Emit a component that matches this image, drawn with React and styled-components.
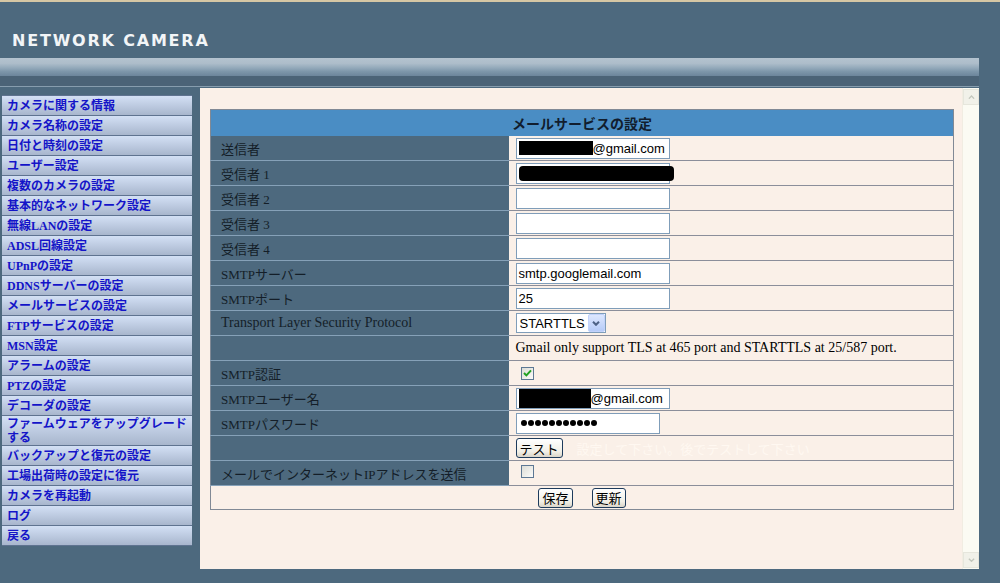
import React from "react";
import styled, { createGlobalStyle } from "styled-components";

const GlobalStyle = createGlobalStyle`
  html, body {
    margin: 0;
    padding: 0;
  }
  body {
    background: #4d697e;
    width: 1000px;
    height: 583px;
    overflow: hidden;
    font-family: "Liberation Serif", "Noto Sans CJK JP", serif;
  }
`;

const Page = styled.div`
  width: 1000px;
  height: 583px;
  display: flex;
  flex-direction: column;
`;

const TopLine = styled.div`
  height: 2px;
  background: #d6c7a4;
`;

const Header = styled.header`
  height: 56px;
  box-sizing: border-box;
  display: flex;
  align-items: flex-end;
  padding: 0 0 9px 12px;
`;

const Logo = styled.div`
  font: bold 16px "DejaVu Sans", sans-serif;
  line-height: 16px;
  letter-spacing: 1.8px;
  color: #f2f5f7;
`;

const Stripe = styled.div`
  width: 979px;
  height: 18px;
  background: linear-gradient(
    #b4c3cf 0%,
    #adbdca 30%,
    #93a9ba 55%,
    #7d96aa 75%,
    #6c859b 100%
  );
`;

const Band = styled.div`
  width: 979px;
  height: 10px;
  background: #4b6377;
  border-bottom: 1px solid #879dae;
`;

const Body = styled.div`
  flex: 1;
  display: flex;
  align-items: flex-start;
`;

const Nav = styled.nav`
  width: 190px;
  margin: 8px 0 0 2px;
  border-top: 1px solid #5f7390;
`;

const NavItem = styled.a`
  display: block;
  box-sizing: border-box;
  height: ${(p) => (p.$tall ? 30 : 20)}px;
  line-height: 19px;
  padding: ${(p) => (p.$tall ? "1px 2px 0 5px" : "0 2px 0 5px")};
  background: linear-gradient(#d3e0f5, #a8b6cd);
  border-bottom: 1px solid #5f7390;
  color: #1414c8;
  font: bold 12px "Liberation Serif", "Noto Sans CJK JP", serif;
  text-decoration: none;
  white-space: nowrap;
  overflow: hidden;
`;

const NavLine = styled.span`
  display: block;
  height: 14px;
  line-height: 14px;
`;

const Panel = styled.main`
  width: 779px;
  height: 481px;
  margin: 1px 0 0 8px;
  background: #faf0e8;
  display: flex;
`;

const Content = styled.div`
  flex: 1;
  padding: 21px 0 0 10px;
`;

const ScrollBar = styled.div`
  width: 17px;
  background: #fbfbf3;
  border-left: 1px solid #f1ede2;
  display: flex;
  flex-direction: column;
  justify-content: space-between;
  padding: 1px 0;
  box-sizing: border-box;
`;

const ScrollButton = styled.div`
  width: 16px;
  height: 16px;
  background: #f1f1e9;
  border: 1px solid #e6e6dc;
  box-sizing: border-box;
  display: flex;
  align-items: center;
  justify-content: center;
`;

const Table = styled.table`
  width: 743px;
  table-layout: fixed;
  border-collapse: collapse;
  border: 1px solid #818995;
`;

const Title = styled.th`
  height: 26px;
  padding: 0;
  background: #4a8dc4;
  color: #111d2e;
  font: bold 14px "Liberation Serif", "Noto Sans CJK JP", serif;
  text-align: center;
  vertical-align: middle;
`;

const Label = styled.td`
  height: 24px;
  padding: 0 0 0 10px;
  background: #4d697e;
  border-bottom: 1px solid #86a1b8;
  color: #141e28;
  font-family: "Liberation Serif", "Noto Sans CJK JP", serif;
  font-size: ${(p) => (p.$latin ? 14 : 13)}px;
  white-space: nowrap;
  vertical-align: middle;
`;

const Value = styled.td`
  height: 24px;
  padding: 0 0 0 7px;
  border-bottom: 1px solid #8b8e9a;
  color: #000;
  font: 14px "Liberation Serif", "Noto Sans CJK JP", serif;
  white-space: nowrap;
  vertical-align: middle;
`;

const Actions = styled.td`
  height: 23px;
  padding: 0;
  text-align: center;
  vertical-align: middle;
`;

const Cell = styled.div`
  display: flex;
  align-items: center;
  gap: ${(p) => p.$gap || 0}px;
  justify-content: ${(p) => (p.$center ? "center" : "flex-start")};
`;

const TextBox = styled.div`
  width: ${(p) => p.$w || 154}px;
  height: 21px;
  box-sizing: border-box;
  border: 1px solid #7f9db9;
  background: #fff;
  display: flex;
  align-items: center;
  padding: 0 2px;
  font: 13px "Liberation Sans", sans-serif;
  color: #000;
  white-space: nowrap;
`;

const Redact = styled.span`
  display: inline-block;
  flex-shrink: 0;
  width: ${(p) => p.$w}px;
  height: ${(p) => p.$h}px;
  background: #000;
  border-radius: ${(p) => p.$r || 0}px;
`;

const Dot = styled.span`
  display: inline-block;
  width: 6px;
  height: 6px;
  margin-right: 1px;
  border-radius: 50%;
  background: #000;
  &:first-child {
    margin-left: 2px;
  }
`;

const Select = styled.div`
  width: 90px;
  height: 20px;
  box-sizing: border-box;
  border: 1px solid #7f9db9;
  background: #fff;
  display: flex;
  align-items: center;
  justify-content: space-between;
  padding-left: 3px;
  font: 13px "Liberation Sans", sans-serif;
`;

const SelectArrow = styled.span`
  width: 17px;
  height: 18px;
  box-sizing: border-box;
  background: linear-gradient(#dde7fe, #b6cbf8);
  border: 1px solid #c2d2fb;
  border-radius: 2px;
  display: flex;
  align-items: center;
  justify-content: center;
`;

const Check = styled.span`
  display: inline-flex;
  align-items: center;
  justify-content: center;
  width: 13px;
  height: 13px;
  margin-left: 5px;
  box-sizing: border-box;
  border: 1px solid #5d7894;
  background: linear-gradient(135deg, #dcdcd6, #fbfbf9);
`;

const Button = styled.button`
  height: 20px;
  padding: 0 3px;
  border: 1px solid #1d3b5c;
  border-radius: 3px;
  background: linear-gradient(#ffffff, #f1efe6 70%, #d9d4c8);
  font: 13px "Noto Sans CJK JP", sans-serif;
  line-height: 17px;
  color: #000;
  cursor: pointer;
`;

const Faint = styled.span`
  margin-left: 14px;
  color: #fff8f1;
  font: 13px "Noto Sans CJK JP", sans-serif;
`;

const navItems = [
  "カメラに関する情報",
  "カメラ名称の設定",
  "日付と時刻の設定",
  "ユーザー設定",
  "複数のカメラの設定",
  "基本的なネットワーク設定",
  "無線LANの設定",
  "ADSL回線設定",
  "UPnPの設定",
  "DDNSサーバーの設定",
  "メールサービスの設定",
  "FTPサービスの設定",
  "MSN設定",
  "アラームの設定",
  "PTZの設定",
  "デコーダの設定",
  "FIRMWARE",
  "バックアップと復元の設定",
  "工場出荷時の設定に復元",
  "カメラを再起動",
  "ログ",
  "戻る",
];

function Chevron({ up, color = "#4d6185", size = 8, weight = 2 }) {
  return (
    <svg width={size} height={size * 0.625} viewBox="0 0 8 5">
      <path
        d={up ? "M1 4.2 L4 1.2 L7 4.2" : "M1 0.8 L4 3.8 L7 0.8"}
        fill="none"
        stroke={color}
        strokeWidth={weight}
      />
    </svg>
  );
}

function Dots({ count }) {
  return Array.from({ length: count }, (_, i) => <Dot key={i} />);
}

function Row({ label, latin, children }) {
  return (
    <tr>
      <Label $latin={latin}>{label}</Label>
      <Value>{children}</Value>
    </tr>
  );
}

export default function App() {
  return (
    <Page>
      <GlobalStyle />
      <TopLine />
      <Header>
        <Logo>NETWORK CAMERA</Logo>
      </Header>
      <Stripe />
      <Band />
      <Body>
        <Nav>
          {navItems.map((item) =>
            item === "FIRMWARE" ? (
              <NavItem key={item} href="#" $tall>
                <NavLine>ファームウェアをアップグレード</NavLine>
                <NavLine>する</NavLine>
              </NavItem>
            ) : (
              <NavItem key={item} href="#">
                {item}
              </NavItem>
            )
          )}
        </Nav>
        <Panel>
          <Content>
            <Table>
              <colgroup>
                <col style={{ width: 298 }} />
                <col style={{ width: 445 }} />
              </colgroup>
              <tbody>
                <tr>
                  <Title colSpan={2}>メールサービスの設定</Title>
                </tr>
                <Row label="送信者">
                  <TextBox>
                    <Redact $w={74} $h={14} />
                    @gmail.com
                  </TextBox>
                </Row>
                <Row label="受信者 1">
                  <TextBox style={{ overflow: "visible" }}>
                    <Redact $w={155} $h={15} $r={4} />
                  </TextBox>
                </Row>
                <Row label="受信者 2">
                  <TextBox />
                </Row>
                <Row label="受信者 3">
                  <TextBox />
                </Row>
                <Row label="受信者 4">
                  <TextBox />
                </Row>
                <Row label="SMTPサーバー">
                  <TextBox>smtp.googlemail.com</TextBox>
                </Row>
                <Row label="SMTPポート">
                  <TextBox>25</TextBox>
                </Row>
                <Row label="Transport Layer Security Protocol" latin>
                  <Select>
                    STARTTLS
                    <SelectArrow>
                      <Chevron />
                    </SelectArrow>
                  </Select>
                </Row>
                <Row label="">
                  Gmail only support TLS at 465 port and STARTTLS at 25/587 port.
                </Row>
                <Row label="SMTP認証">
                  <Check>
                    <svg width="9" height="8" viewBox="0 0 9 8">
                      <path
                        d="M1 4 L3.4 6.4 L8 1.4"
                        fill="none"
                        stroke="#21a121"
                        strokeWidth="2"
                      />
                    </svg>
                  </Check>
                </Row>
                <Row label="SMTPユーザー名">
                  <TextBox>
                    <Redact $w={72} $h={19} />
                    @gmail.com
                  </TextBox>
                </Row>
                <Row label="SMTPパスワード">
                  <TextBox $w={144}>
                    <Dots count={11} />
                  </TextBox>
                </Row>
                <Row label="">
                  <Cell>
                    <Button>テスト</Button>
                    <Faint>設定して下さい。後でテストして下さい</Faint>
                  </Cell>
                </Row>
                <Row label="メールでインターネットIPアドレスを送信">
                  <Check />
                </Row>
                <tr>
                  <Actions colSpan={2}>
                    <Cell $center $gap={19}>
                      <Button>保存</Button>
                      <Button>更新</Button>
                    </Cell>
                  </Actions>
                </tr>
              </tbody>
            </Table>
          </Content>
          <ScrollBar>
            <ScrollButton>
              <Chevron up color="#c3c7bd" size={7} weight={1.5} />
            </ScrollButton>
            <ScrollButton>
              <Chevron color="#c3c7bd" size={7} weight={1.5} />
            </ScrollButton>
          </ScrollBar>
        </Panel>
      </Body>
    </Page>
  );
}
